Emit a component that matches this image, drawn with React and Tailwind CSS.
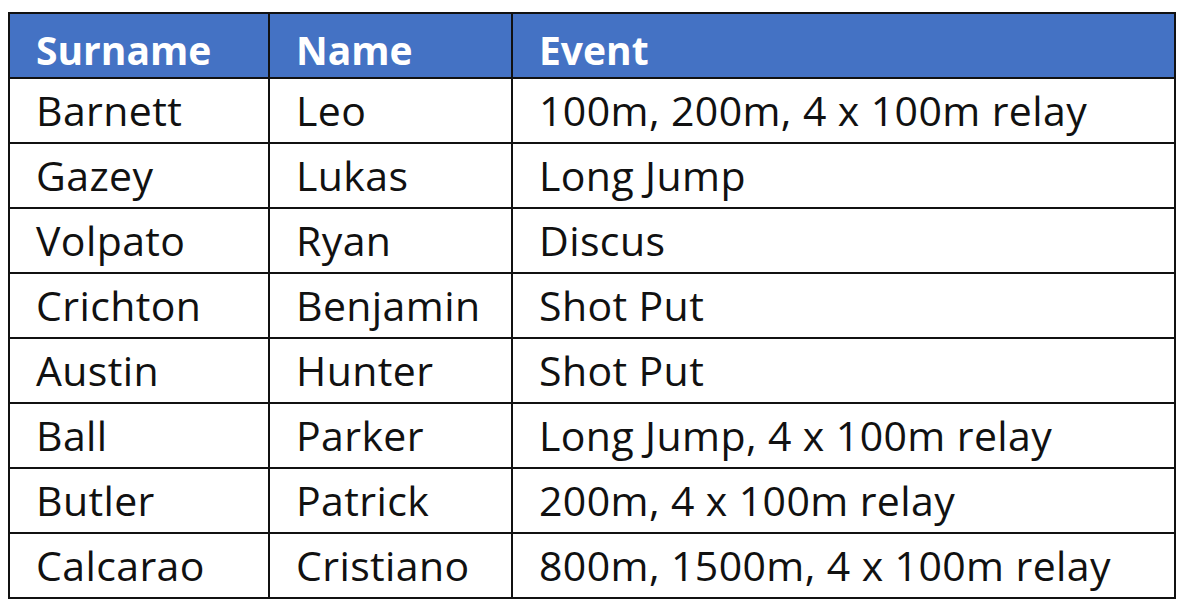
import React from "react";

const rows = [
  ["Barnett", "Leo", "100m, 200m, 4 x 100m relay"],
  ["Gazey", "Lukas", "Long Jump"],
  ["Volpato", "Ryan", "Discus"],
  ["Crichton", "Benjamin", "Shot Put"],
  ["Austin", "Hunter", "Shot Put"],
  ["Ball", "Parker", "Long Jump, 4 x 100m relay"],
  ["Butler", "Patrick", "200m, 4 x 100m relay"],
  ["Calcarao", "Cristiano", "800m, 1500m, 4 x 100m relay"],
];

export default function App() {
  return (
    <div className="w-[1200px] h-[613px] bg-white pl-[8px] pt-[12px] [font-variant-ligatures:none]" style={{ fontFamily: "'Open Sans', Lato, sans-serif" }}>
      <div className="w-[1168px] grid grid-cols-[258px_241px_661px] auto-rows-[63px] gap-[2px] p-[2px] bg-[#111]">
        {["Surname", "Name", "Event"].map((h) => (
          <div key={h} className="bg-[#4472c4] text-white font-bold text-[39px] pl-[26px] flex items-center pt-[8px] leading-none">
            {h}
          </div>
        ))}
        {rows.map((r, i) =>
          r.map((c, j) => (
            <div key={i + "-" + j} className="bg-white text-[#111] text-[41px] tracking-[0.4px] pl-[26px] flex items-center pt-[0px] leading-none">
              {c}
            </div>
          ))
        )}
      </div>
    </div>
  );
}
